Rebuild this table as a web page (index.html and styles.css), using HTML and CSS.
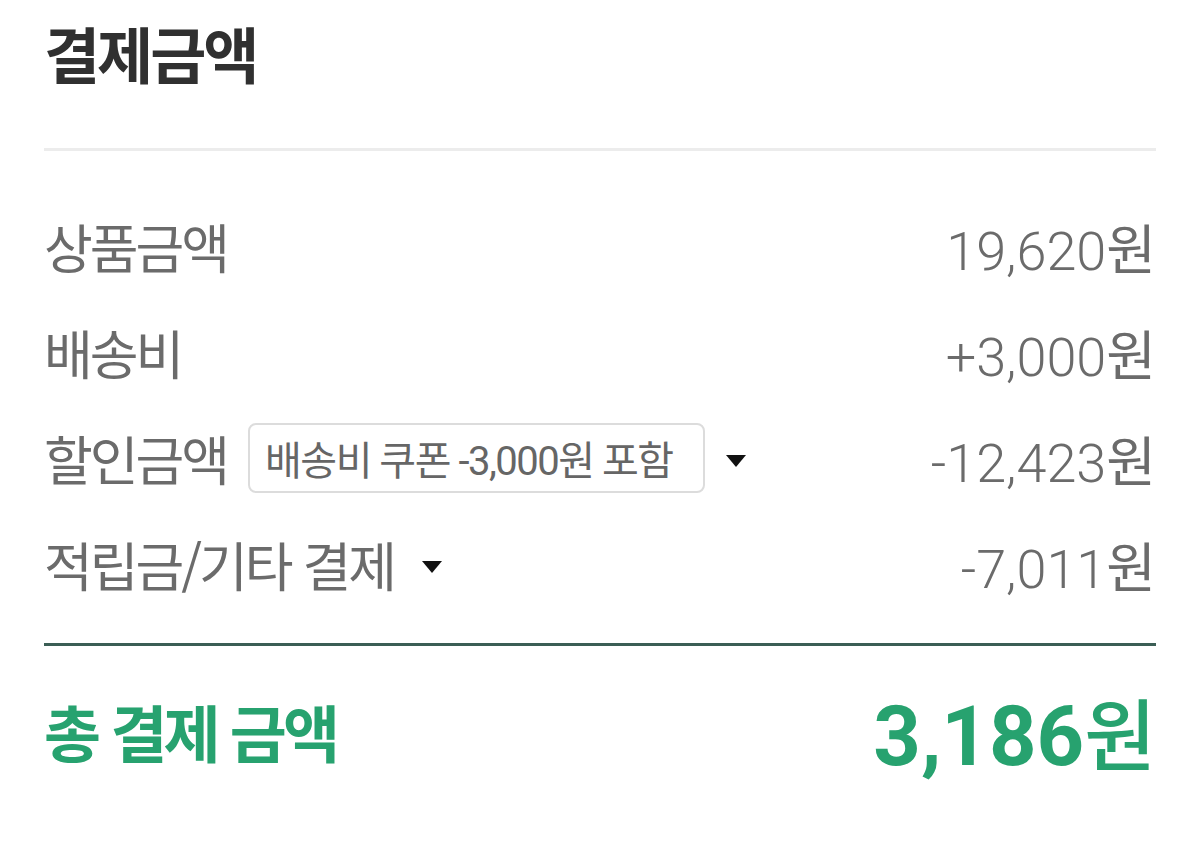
FILE: index.html
```html
<!DOCTYPE html>
<html lang="ko">
<head>
<meta charset="utf-8">
<title>결제금액</title>
<link rel="stylesheet" href="styles.css">
</head>
<body>
<div class="wrap">
  <h1 class="title">결제금액</h1>
  <div class="divider"></div>
  <div class="list">
    <div class="row">
      <div class="label">상품금액</div>
      <div class="amount"><span class="num">19,620</span><span class="won">원</span></div>
    </div>
    <div class="row">
      <div class="label">배송비</div>
      <div class="amount"><span class="num">+3,000</span><span class="won">원</span></div>
    </div>
    <div class="row">
      <div class="label-group">
        <div class="label">할인금액</div>
        <div class="badge">배송비 쿠폰 -3,000원 포함</div>
        <span class="caret caret-badge"></span>
      </div>
      <div class="amount"><span class="num">-12,423</span><span class="won">원</span></div>
    </div>
    <div class="row">
      <div class="label-group">
        <div class="label">적립금/기타 결제</div>
        <span class="caret caret-plain"></span>
      </div>
      <div class="amount"><span class="num">-7,011</span><span class="won">원</span></div>
    </div>
  </div>
  <div class="total-line"></div>
  <div class="total">
    <div class="total-label">총 결제 금액</div>
    <div class="total-amount"><span class="tnum">3,186</span><span class="twon">원</span></div>
  </div>
</div>
</body>
</html>
```

FILE: styles.css
```css
html, body {
  margin: 0;
  padding: 0;
  background: #ffffff;
}

body {
  font-family: Roboto, "Noto Sans CJK KR", sans-serif;
  color: #6b6b6b;
}

.wrap {
  padding: 0 44px;
}

.title {
  margin: 0;
  padding-top: 22px;
  font-family: "Noto Sans CJK KR", sans-serif;
  font-size: 61px;
  line-height: 61px;
  font-weight: 700;
  letter-spacing: -3px;
  color: #303030;
}

.divider {
  margin-top: 65px;
  height: 3px;
  background: #ececec;
}

.list {
  padding-top: 42px;
  padding-bottom: 26px;
}

.row {
  height: 106px;
  display: flex;
  align-items: center;
  justify-content: space-between;
}

.label-group {
  display: flex;
  align-items: center;
}

.label {
  font-family: "Noto Sans CJK KR", sans-serif;
  font-size: 53px;
  letter-spacing: -3px;
  color: #6b6b6b;
}

.amount {
  font-size: 54px;
  color: #6b6b6b;
  white-space: nowrap;
}

.num {
  font-family: Roboto, sans-serif;
  font-weight: 300;
}

.won {
  font-family: "Noto Sans CJK KR", sans-serif;
  font-weight: 400;
}

.badge {
  margin-left: 21px;
  height: 70px;
  box-sizing: border-box;
  display: flex;
  align-items: center;
  padding: 0 30px 0 15px;
  border: 2px solid #dcdcdc;
  border-radius: 8px;
  font-family: Roboto, "Noto Sans CJK KR", sans-serif;
  font-size: 40px;
  letter-spacing: -1.5px;
  color: #666666;
  white-space: nowrap;
}

.caret {
  width: 0;
  height: 0;
  border-left: 10.5px solid transparent;
  border-right: 10.5px solid transparent;
  border-top: 12px solid #111111;
}

.caret-badge {
  margin-left: 21px;
  margin-top: 6px;
}

.caret-plain {
  margin-left: 28px;
  margin-top: 6px;
}

.total-line {
  height: 3px;
  background: #3b5e55;
}

.total {
  height: 170px;
  display: flex;
  align-items: center;
  justify-content: space-between;
  color: #27a26f;
}

.total-label {
  font-family: "Noto Sans CJK KR", sans-serif;
  font-size: 62px;
  font-weight: 700;
  letter-spacing: -4px;
}

.total-amount {
  white-space: nowrap;
}

.tnum {
  font-family: Roboto, sans-serif;
  font-size: 83px;
  font-weight: 700;
}

.twon {
  font-family: "Noto Sans CJK KR", sans-serif;
  font-size: 78px;
  font-weight: 500;
}
```
